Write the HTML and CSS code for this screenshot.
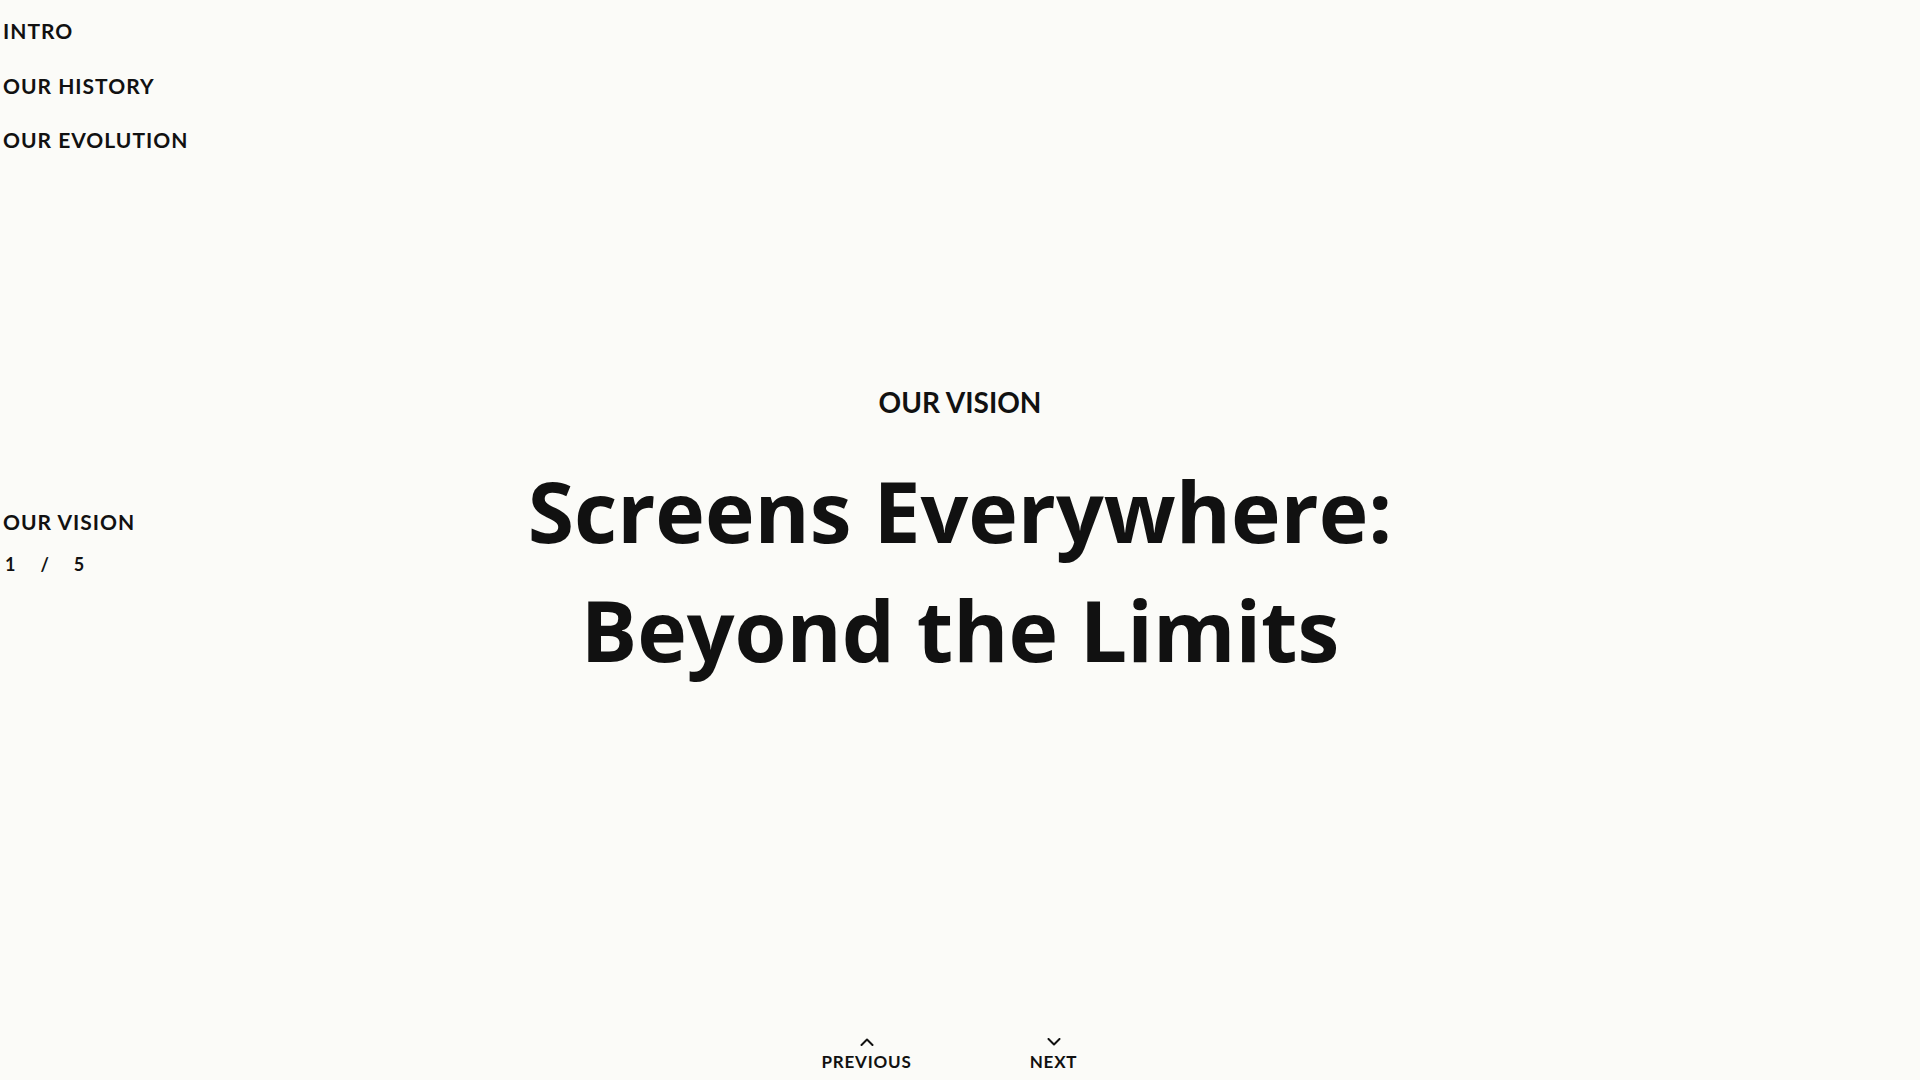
FILE: index.html
```html
<!DOCTYPE html>
<html lang="en">
<head>
<meta charset="utf-8">
<title>Our Vision</title>
<link rel="stylesheet" href="styles.css">
</head>
<body>
<div class="page">
  <nav class="side">
    <ul class="side-list">
      <li class="side-item">INTRO</li>
      <li class="side-item">OUR HISTORY</li>
      <li class="side-item">OUR EVOLUTION</li>
    </ul>
    <div class="current">
      <div class="current-title">OUR VISION</div>
      <div class="counter"><span>1</span><span>/</span><span>5</span></div>
    </div>
  </nav>
  <main class="stage">
    <section class="slide">
      <h2 class="eyebrow">OUR VISION</h2>
      <h1 class="title">Screens Everywhere:<br>Beyond the Limits</h1>
    </section>
    <div class="pager">
      <button class="pager-btn" type="button">
        <svg class="chev" width="14" height="8" viewBox="0 0 14 8"><path d="M1.5 7 L7 1.5 L12.5 7" fill="none" stroke="#111" stroke-width="2" stroke-linecap="round" stroke-linejoin="round"/></svg>
        <span class="pager-label">PREVIOUS</span>
      </button>
      <button class="pager-btn" type="button">
        <svg class="chev" width="14" height="8" viewBox="0 0 14 8"><path d="M1.5 1 L7 6.5 L12.5 1" fill="none" stroke="#111" stroke-width="2" stroke-linecap="round" stroke-linejoin="round"/></svg>
        <span class="pager-label">NEXT</span>
      </button>
    </div>
  </main>
</div>
</body>
</html>
```
FILE: styles.css
```css
* { box-sizing: border-box; }
html, body { margin: 0; padding: 0; }
body {
  background: #fbfbf8;
  color: #111;
  font-family: Lato, "Open Sans", "Liberation Sans", sans-serif;
  width: 1920px;
  height: 1080px;
  overflow: hidden;
}
.page {
  display: grid;
  grid-template-columns: 1920px;
  grid-template-rows: 1080px;
}
.side, .stage { grid-area: 1 / 1; }
.side {
  justify-self: start;
  display: flex;
  flex-direction: column;
  padding: 19px 0 0 3px;
  z-index: 1;
}
.side-list {
  list-style: none;
  margin: 0;
  padding: 0;
  display: flex;
  flex-direction: column;
  gap: 30.5px;
}
.side-item, .current-title {
  font-size: 21px;
  line-height: 24px;
  font-weight: 700;
  letter-spacing: 1px;
}
.current { margin-top: 358px; }
.counter {
  margin-top: 19.6px;
  display: flex;
  gap: 25px;
  padding-left: 2px;
  font-size: 18px;
  line-height: 20px;
  font-weight: 700;
}
.stage {
  display: flex;
  flex-direction: column;
  align-items: center;
  padding-top: 385px;
}
.slide {
  display: flex;
  flex-direction: column;
  align-items: center;
  text-align: center;
}
.eyebrow {
  margin: 0;
  font-size: 28px;
  line-height: 34px;
  font-weight: 700;
}
.title {
  margin: 32px 0 0;
  font-family: "Open Sans", Lato, sans-serif;
  font-size: 84px;
  line-height: 119px;
  font-weight: 700;
  letter-spacing: 0;
}
.pager {
  margin-top: auto;
  padding-bottom: 8.4px;
  display: flex;
  gap: 27px;
}
.pager-btn {
  width: 160px;
  background: none;
  border: 0;
  padding: 0;
  display: flex;
  flex-direction: column;
  align-items: center;
  gap: 5.6px;
  color: #111;
  font-family: inherit;
  cursor: pointer;
}
.chev { display: block; }
.pager-label {
  font-size: 17px;
  line-height: 20px;
  font-weight: 700;
  letter-spacing: 0.8px;
}
```
